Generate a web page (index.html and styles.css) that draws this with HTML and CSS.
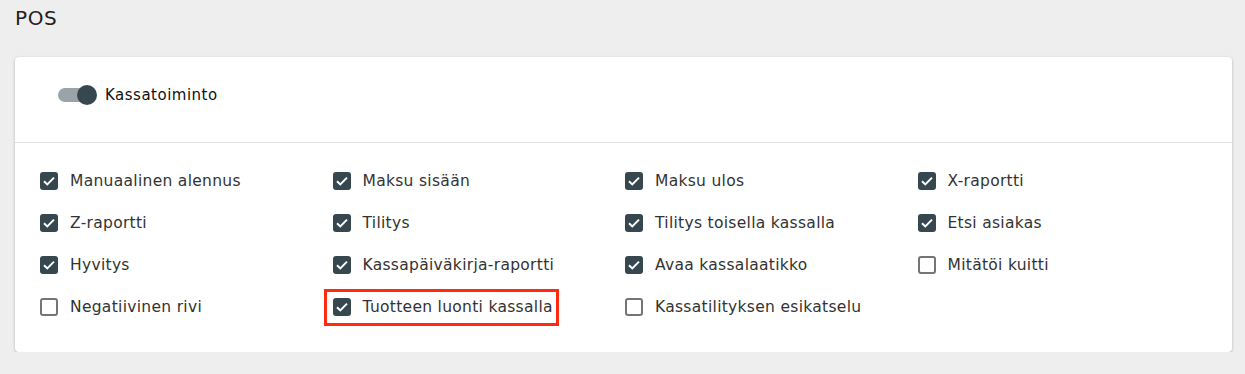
FILE: index.html
```html
<!DOCTYPE html>
<html lang="fi">
<head>
    <meta charset="UTF-8" />
    <title>POS</title>
    <link rel="stylesheet" href="styles.css">
</head>
<body>
    <h1 class="page-title">POS</h1>

    <div class="card">
        <div class="card-head">
            <label class="switch">
                <span class="switch-track"><span class="switch-thumb"></span></span>
                <span class="switch-label">Kassatoiminto</span>
            </label>
        </div>

        <div class="options">
            <label class="option"><span class="box checked"></span>Manuaalinen alennus</label>
            <label class="option"><span class="box checked"></span>Maksu sisään</label>
            <label class="option"><span class="box checked"></span>Maksu ulos</label>
            <label class="option"><span class="box checked"></span>X-raportti</label>

            <label class="option"><span class="box checked"></span>Z-raportti</label>
            <label class="option"><span class="box checked"></span>Tilitys</label>
            <label class="option"><span class="box checked"></span>Tilitys toisella kassalla</label>
            <label class="option"><span class="box checked"></span>Etsi asiakas</label>

            <label class="option"><span class="box checked"></span>Hyvitys</label>
            <label class="option"><span class="box checked"></span>Kassapäiväkirja-raportti</label>
            <label class="option"><span class="box checked"></span>Avaa kassalaatikko</label>
            <label class="option"><span class="box"></span>Mitätöi kuitti</label>

            <label class="option"><span class="box"></span>Negatiivinen rivi</label>
            <div class="option-cell">
                <label class="option highlight"><span class="box checked"></span>Tuotteen luonti kassalla</label>
            </div>
            <label class="option"><span class="box"></span>Kassatilityksen esikatselu</label>
        </div>
    </div>
</body>
</html>
```

FILE: styles.css
```css
* {
    box-sizing: border-box;
    margin: 0;
    padding: 0;
}

body {
    font-family: 'DejaVu Sans', 'Noto Sans', sans-serif;
    background: #eeeeee;
    color: #212121;
    padding: 0 13px 0 15px;
}

.page-title {
    font-size: 20px;
    font-weight: 400;
    letter-spacing: 0.6px;
    line-height: 24px;
    padding-top: 6px;
    height: 57px;
}

.card {
    background: #fff;
    border-radius: 4px;
    box-shadow: 0 1px 3px rgba(0, 0, 0, 0.25);
}

.card-head {
    height: 86px;
    padding: 26px 0 0 43px;
    border-bottom: 1px solid #e0e0e0;
}

.switch {
    display: flex;
    align-items: center;
    height: 24px;
}

.switch-track {
    position: relative;
    width: 34px;
    height: 14px;
    margin-right: 13px;
    border-radius: 7px;
    background: #9aa3a7;
}

.switch-thumb {
    position: absolute;
    right: -5px;
    top: -3px;
    width: 20px;
    height: 20px;
    border-radius: 50%;
    background: #37474f;
}

.switch-label {
    font-size: 15px;
    letter-spacing: 0.5px;
    color: #111;
}

.options {
    display: grid;
    grid-template-columns: repeat(4, 1fr);
    padding: 17px 22px 24px 25px;
}

.option,
.option-cell {
    height: 42px;
    display: flex;
    align-items: center;
}

.option {
    font-size: 15.5px;
    letter-spacing: 0.3px;
    color: #333;
}

.option-cell .option {
    height: 37px;
    margin-left: -9px;
    padding: 0 3px 0 6px;
    border: 3px solid #ff2a0f;
}

.box {
    width: 18px;
    height: 18px;
    margin-right: 12px;
    border: 2px solid #757575;
    border-radius: 3px;
    flex-shrink: 0;
}

.box.checked {
    border: none;
    background: #37474f url("data:image/svg+xml,%3Csvg xmlns='http://www.w3.org/2000/svg' viewBox='0 0 18 18'%3E%3Cpath d='M4 9.2l3.3 3.2L14 5.6' fill='none' stroke='white' stroke-width='2'/%3E%3C/svg%3E") no-repeat center;
}
```
